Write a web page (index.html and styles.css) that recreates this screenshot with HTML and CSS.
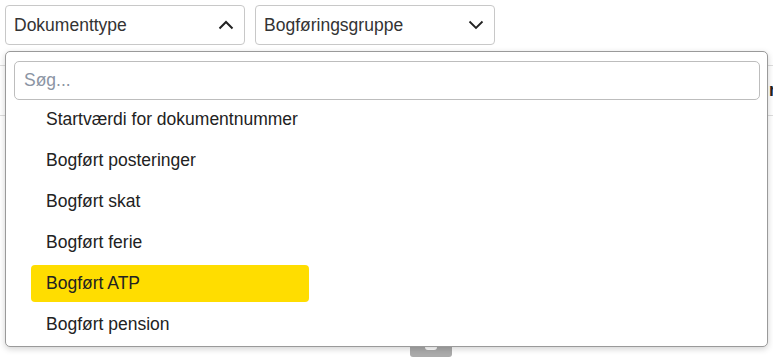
FILE: index.html
```html
<!DOCTYPE html>
<html lang="da">
<head>
    <meta charset="UTF-8">
    <meta name="viewport" content="width=device-width, initial-scale=1.0">
    <title>Bogføring</title>
    <link rel="stylesheet" href="styles.css">
</head>
<body>

<div class="filters">
    <div class="filter">
        <div class="select open">
            <span>Dokumenttype</span>
            <svg class="chevron" width="16" height="10" viewBox="0 0 16 10"><path d="M1.5 8.5 L8 2 L14.5 8.5" fill="none" stroke="#222" stroke-width="2"/></svg>
        </div>

        <div class="dropdown">
            <input class="search" type="text" placeholder="Søg...">
            <ul class="options">
                <li>Startværdi for dokumentnummer</li>
                <li>Bogført posteringer</li>
                <li>Bogført skat</li>
                <li>Bogført ferie</li>
                <li class="active">Bogført ATP</li>
                <li>Bogført pension</li>
            </ul>
        </div>
    </div>

    <div class="filter">
        <div class="select">
            <span>Bogføringsgruppe</span>
            <svg class="chevron" width="16" height="10" viewBox="0 0 16 10"><path d="M1.5 1.5 L8 8 L14.5 1.5" fill="none" stroke="#222" stroke-width="1.8"/></svg>
        </div>
    </div>
</div>

<div class="table">
    <div class="table-head">
        <div class="col-main"></div>
        <div class="col-head">nr.</div>
    </div>
    <div class="table-body"></div>
</div>

<div class="footer">
    <div class="handle"></div>
</div>

</body>
</html>
```

FILE: styles.css
```css
/* Layout */
body {
    font-family: 'Liberation Sans', Arial, sans-serif;
    font-size: 17.5px;
    color: #222;
    background-color: #fff;
    margin: 0;
    padding: 0;
    overflow: hidden;
}
.filters {
    display: flex;
    gap: 10px;
    padding: 5px;
}
.filter {
    position: relative;
}
.select {
    box-sizing: border-box;
    width: 240px;
    height: 40px;
    border: 1px solid #c8c8c8;
    border-radius: 4px;
    display: flex;
    align-items: center;
    justify-content: space-between;
    padding: 0 10px 0 8px;
    color: #333;
}
.chevron {
    display: block;
}

/* Dropdown */
.dropdown {
    position: absolute;
    top: 46px;
    left: 0;
    width: 763px;
    height: 296px;
    box-sizing: border-box;
    background-color: #fff;
    border: 1px solid #9a9a9a;
    border-radius: 5px;
    box-shadow: 0 2px 6px rgba(0, 0, 0, 0.18);
    padding: 9px 7px 3px 8px;
    z-index: 10;
}
.search {
    display: block;
    box-sizing: border-box;
    width: 100%;
    height: 39px;
    margin: 0 0 1px 0;
    padding: 0 9px;
    font-family: inherit;
    font-size: 17.5px;
    border: 1px solid #bdbdbd;
    border-radius: 5px;
    outline: none;
}
.search::placeholder {
    color: #8b94a3;
}
.options {
    list-style: none;
    margin: 0;
    padding: 0 0 0 17px;
    display: flex;
    flex-direction: column;
    gap: 4px;
}
.options li {
    width: 278px;
    height: 37px;
    box-sizing: border-box;
    padding-left: 15px;
    display: flex;
    align-items: center;
    border-radius: 4px;
    color: #222;
}
.options li.active {
    background-color: #ffdd00;
}

/* Tabel bagved */
.table {
    margin-top: 15px;
}
.table-head {
    height: 51px;
    box-sizing: border-box;
    border-top: 1px solid #ddd;
    border-bottom: 1px solid #ddd;
    display: flex;
    align-items: center;
}
.col-main {
    width: 769px;
    flex-shrink: 0;
}
.col-head {
    font-weight: bold;
    white-space: nowrap;
}
.table-body {
    height: 230px;
}
.footer {
    display: flex;
    padding-left: 410px;
}
.handle {
    position: relative;
    width: 42px;
    height: 11px;
    background-color: #ababab;
    border-radius: 0 0 3px 3px;
}
.handle::after {
    content: '';
    position: absolute;
    top: 0;
    left: 15px;
    width: 12px;
    height: 4px;
    background-color: #fff;
    border-radius: 0 0 3px 3px;
}
```
